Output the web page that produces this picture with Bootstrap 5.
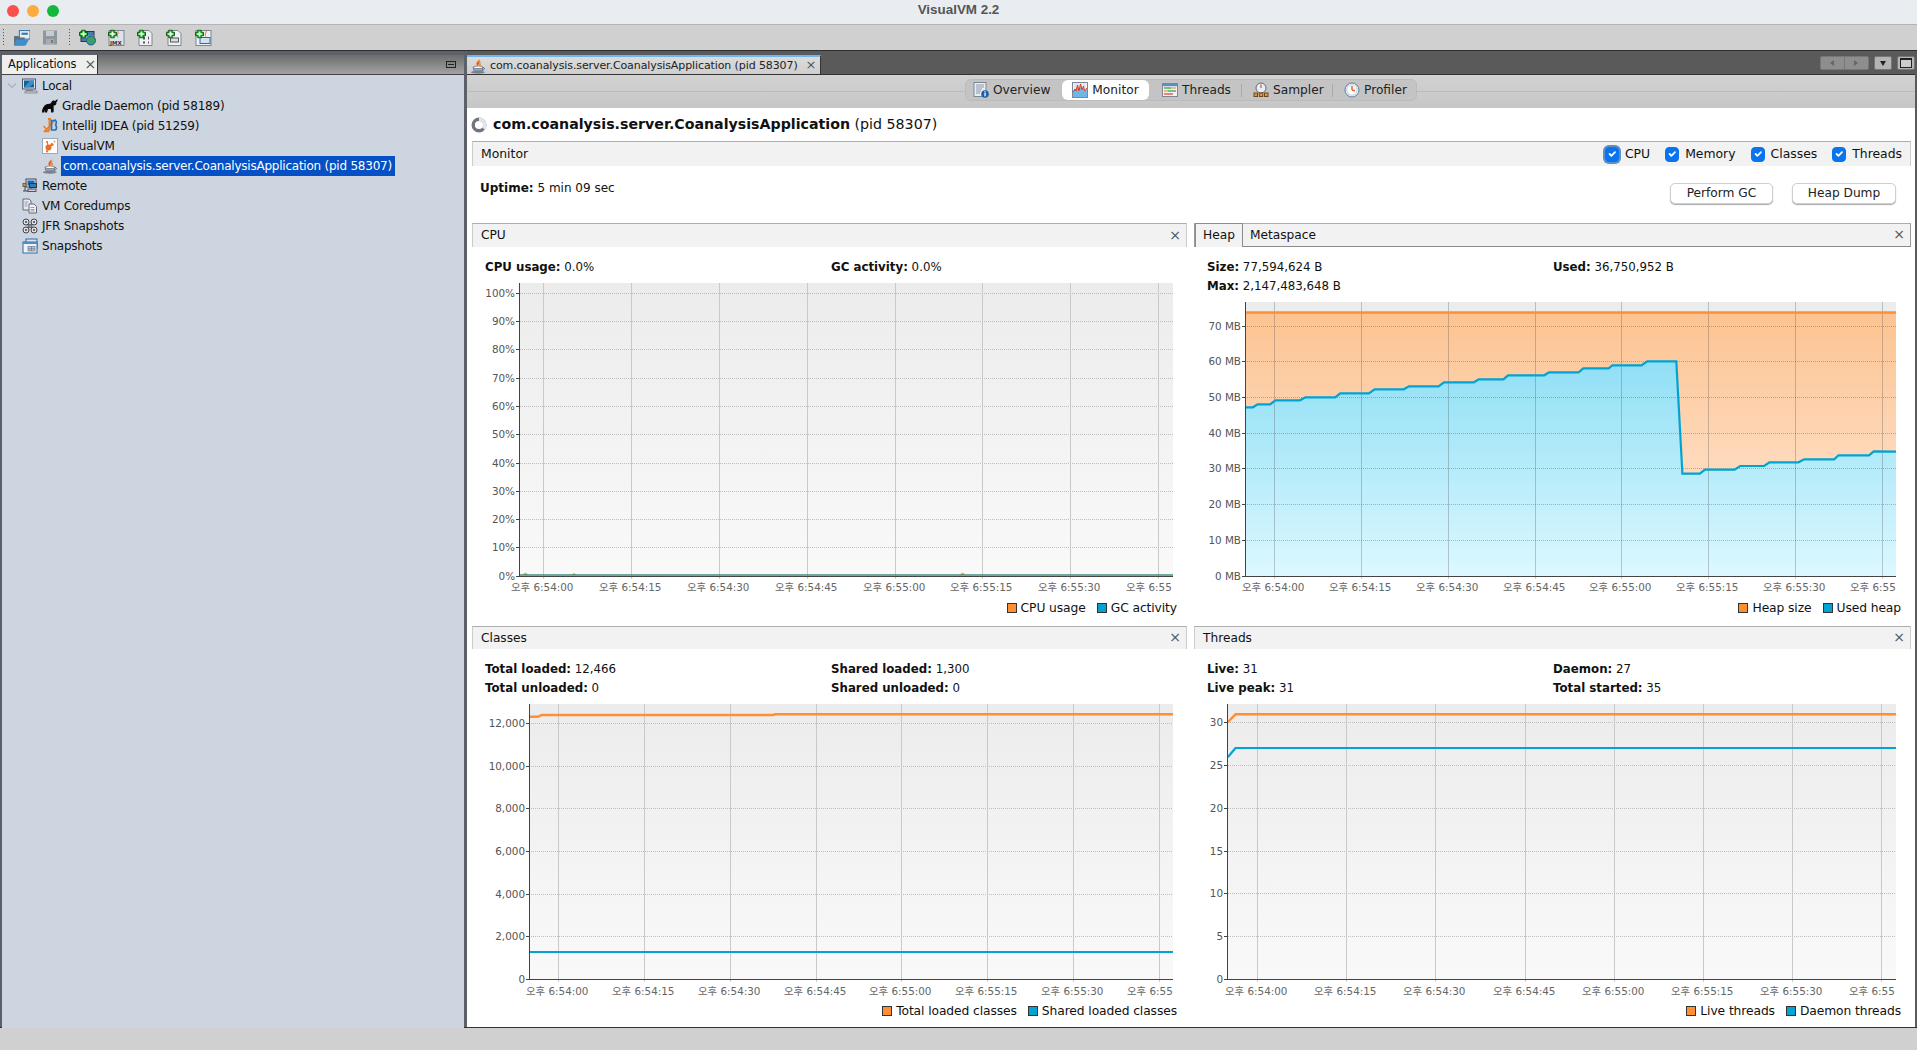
<!DOCTYPE html>
<html lang="en">
<head>
<meta charset="utf-8">
<title>VisualVM 2.2</title>
<link href="https://cdn.jsdelivr.net/npm/bootstrap@5.3.0/dist/css/bootstrap.min.css" rel="stylesheet">
<script src="https://cdn.jsdelivr.net/npm/bootstrap@5.3.0/dist/js/bootstrap.bundle.min.js"></script>
<style>
html,body{height:1050px;width:1917px;overflow:hidden}
body{background:#d0d0d0;font:12px/1.2 "DejaVu Sans","Noto Sans CJK KR",sans-serif;color:#111}
.vm-title{height:25px;background:#e9edf1;border-bottom:1px solid #b4b4b4;font:700 13.4px/1 "Liberation Sans",sans-serif;color:#555;position:relative;padding-bottom:4px}
.vm-lights{position:absolute;left:7px;top:5px;gap:8px}
.vm-light{width:12px;height:12px;border-radius:50%}
.vm-tools{height:25px;background:#d0d0d0}
.vm-main{height:977px;background:#2f2f2f;padding-top:1px}
.vm-left{width:467px;background:#5c6068;padding:4px 3px 0 2px;flex:none}
.vm-ltabs{height:20px;background:linear-gradient(#6c6c6c,#a3a3a3);border-bottom:1px solid #444}
.vm-ltab{width:96px;background:#efefef;font-size:11.4px;letter-spacing:-.1px;padding-left:6px;gap:8px;border-right:1px solid #333}
.vm-x{color:#555;font-size:14px;line-height:1;margin-top:-2px}
.vm-min{width:10px;height:7px;border:1px solid #222;margin-right:8px;position:relative}
.vm-min::after{content:"";position:absolute;left:1px;right:1px;top:2px;height:1px;background:#222}
.vm-tree{height:953px;background:#cdd5e0;padding-top:1px;font-size:12px;letter-spacing:-.23px}
.vm-row{height:20px;gap:4px;padding-left:20px}
.vm-row.vm-sub{padding-left:40px}
.vm-row svg{width:16px;height:16px;flex:none}
.vm-row svg.vm-chev{position:absolute;left:5px;top:7px;width:10px;height:6px}
.vm-sel{background:#0450c4;color:#fff;padding:0 3px 0 2px;height:20px;line-height:20px;margin-left:-1px}
.vm-right{flex:1;padding:4px 2px 0 0;background:#5a5a5a;min-width:0}
.vm-rhead{height:20px;border-bottom:1px solid #333}
.vm-rtab{width:354px;background:linear-gradient(#dcdcdc,#cfcfcf);border-top:2px solid #6db5f0;border-right:1px solid #333;font-size:11px;letter-spacing:-.1px;padding-left:3px;gap:4px;color:#222;white-space:nowrap}
.vm-rtab .vm-x{font-size:13px}
.vm-wbtns{padding-top:1px;gap:5px}
.vm-wbtn{height:14px;background:#8e8e8e;border-radius:2px;border:1px solid #777}
.vm-wbtn svg{display:block;width:100%;height:100%}
.vm-switch{height:33px;background:linear-gradient(#d2d2d2,#c6c6c6);position:relative}
.vm-switch::before{content:"";position:absolute;left:0;right:0;top:16px;height:1px;background:#bcbcbc}
.vm-pill{position:absolute;left:498px;top:4px;height:22px;width:452px;border-radius:6px;background:#c4c4c4;border:1px solid #bbb;color:#222}
.vm-pill .btn{--bs-btn-font-size:12.2px;--bs-btn-padding-x:0;--bs-btn-padding-y:0;--bs-btn-border-width:0;--bs-btn-color:#222;--bs-btn-hover-color:#222;--bs-btn-line-height:20px;height:20px;gap:4px;border-radius:6px;position:absolute;top:0;white-space:nowrap}
.vm-pill .btn svg{width:16px;height:16px;flex:none}
.vm-pill .btn.vm-on{background:#fff;width:87px;left:96px;justify-content:center}
.vm-vsep{position:absolute;top:4px;height:13px;width:1px;background:#aaa}
.vm-content{height:919px;background:#fff;padding:0 4px 0 5px}
.vm-h1{height:33px;font-size:14.2px;gap:6px;color:#111;padding-top:1px}
.vm-spin{width:16px;height:16px;flex:none;margin-left:-1px}
.vm-bar{height:25px;background:#f2f2f2;border-top:1px solid #adadad;border-left:1px solid #ccc;border-right:1px solid #ccc;padding:0 8px 0 8px;font-size:12.4px}
.vm-bar .form-check-input{width:14px;height:15px;margin:0;float:none;border-radius:4px;background-color:#0a74ef;border-color:#0a74ef;flex:none}
.vm-bar .form-check-input.vm-focus{box-shadow:0 0 0 2px #5d8fc0}
.vm-chk{gap:6px;margin:0;padding:0;min-height:0}
.vm-chk .form-check-label{line-height:1}
.vm-uptime{height:57px;position:relative;padding:15px 0 0 8px;font-size:12px}
.vm-uptime .btn{--bs-btn-font-size:12.2px;--bs-btn-padding-y:0;--bs-btn-padding-x:0;--bs-btn-color:#222;--bs-btn-bg:#fff;--bs-btn-border-color:#cfcfcf;--bs-btn-hover-color:#222;--bs-btn-hover-bg:#fff;--bs-btn-border-radius:5px;height:21px;line-height:19px;box-shadow:0 1px 1px #aaa}
.vm-btns{position:absolute;top:17px;right:15px;gap:19px}
.vm-grid{display:grid;grid-template-columns:715px 717px;column-gap:7px}
.vm-phead{height:24px;background:#f2f2f2;border-top:1px solid #adadad;border-left:1px solid #ccc;border-right:1px solid #ccc;padding:0 5px 0 8px;font-size:12.2px}
.vm-ptab{height:24px;margin:-1px 0 0 -8px;padding:0 7px 0 7px;border:1px solid #8c8c8c;border-bottom:0;background:#f2f2f2}
.vm-phead.vm-tabbed{border-bottom:1px solid #8a8a8a;border-right-color:#9a9a9a;border-left-color:#9a9a9a}
.vm-phead.vm-tabbed .vm-other{margin-left:7px}
.vm-p1{height:403px}
.vm-p2{height:401px}
.vm-p2 .vm-phead{height:23px}
.vm-stats{font-size:11.8px;padding-left:13px;display:grid;grid-template-columns:346px 1fr;align-content:start;row-gap:5px}
.vm-s1{height:36px;padding-top:13px}
.vm-s2{height:55px;padding-top:13px}
.vm-stats>div{line-height:14px;white-space:nowrap}
.vm-chart{display:block}
.vm-legend{gap:11px;font-size:12.3px;padding-right:10px;letter-spacing:-.1px;height:20px}
.vm-p2 .vm-legend{height:22px}
.vm-legend span{gap:4px}
.vm-sw{width:10px;height:10px;border:1px solid #333;flex:none}
.vm-status{height:23px;background:#d0d0d0;border-top:1px solid #333}
.xl{font-size:10.4px;fill:#666}
.yl{font-size:10.4px;fill:#555;text-anchor:end}
.gv{stroke:#c9c9c9;stroke-width:1;fill:none}
.gd{stroke:rgba(70,70,70,.28);stroke-width:1;fill:none}
.gh{stroke:#bdbdbd;stroke-width:1;stroke-dasharray:1 1;fill:none}
.gk{stroke:rgba(60,60,60,.33);stroke-width:1;stroke-dasharray:1 1;fill:none}
.ax{stroke:#444;stroke-width:1;fill:none;shape-rendering:crispEdges}
.lo{stroke:#ff8f33;stroke-width:2.4;fill:none}
.lb{stroke:#01a3d3;stroke-width:2.2;fill:none}
</style>
</head>
<body>
<svg width="0" height="0" class="position-absolute">
<defs>
<symbol id="i-java" viewBox="0 0 16 16"><path d="M9 0c1.500 2.500-3.500 3.500-2.500 6.500.3 1 1 1.600 1.400 2.400C7.500 7 11 5.500 9 0z" fill="#e8641b"/><path d="M11.500 3c-2.500 1-3 2.200-2.200 3.800.3.700.2 1.300-.2 2 2.200-.9 2.200-2.500 1.400-3.500-.4-.7 0-1.500 1-2.300z" fill="#f08a2f"/><path d="M3 9h10l-.8 3.500c-.5 1-7.900 1-8.400 0z" fill="#9aa6b3" stroke="#5a6470" stroke-width=".7"/><ellipse cx="8" cy="9.300" rx="4.500" ry="1.300" fill="#fff" stroke="#667" stroke-width=".7"/><path d="M13 9.500c2 0 2 2.500-.8 2.800" stroke="#5a6470" fill="none" stroke-width=".9"/><ellipse cx="7.800" cy="14.200" rx="7" ry="1.500" fill="#76828f"/></symbol>
<symbol id="i-local" viewBox="0 0 16 16"><rect x=".5" y="1" width="13" height="10" fill="#dfe4ea" stroke="#556"/><rect x="2" y="2.500" width="10" height="7" fill="#0f5f9c"/><path d="M2 9.500l6-7h4v3l-5 4z" fill="#3d8ec9"/><rect x="4" y="11.500" width="7" height="1.500" fill="#889"/><rect x="3" y="13" width="12" height="2" fill="#c5ccd4" stroke="#667" stroke-width=".6"/></symbol>
<symbol id="i-gradle" viewBox="0 0 16 16"><path d="M0 14.500c0-2.500.5-4 1.500-5.500C3 6.500 5.500 5.500 8 5.800c1.200-.3 1.300-2.300 2.800-3 1-.5 2 0 2.300.3.700-.8 1.500-2 2.700-1.600-.2 1.100-.7 2-1.400 2.700.3 2.200-1 3.300-2.800 3.400l.1 5c0 1.200-.3 1.900-.8 1.900H9.200l-.4-3.600H6L5 14.500H2.800l-.2-2.600-.6 2.600z" fill="#0a0a0a"/></symbol>
<symbol id="i-idea" viewBox="0 0 16 16"><path d="M6 1h3M7.500 1v9c0 3-3.500 4.500-5.500 2.500" stroke="#f07b1d" stroke-width="1.800" fill="none"/><path d="M1.500 8L7 14M14 1L3 13" stroke="#f07b1d" stroke-width="1.300" fill="none"/><path d="M9.500 2.500H13c1.800 0 1.800 4 0 4.500 2 .3 2 5-.3 5H9.500z" stroke="#2e6fb8" stroke-width="1.700" fill="none"/></symbol>
<symbol id="i-vvm" viewBox="0 0 16 16"><rect x=".5" y=".5" width="15" height="15" fill="#fff" stroke="#9aa9ba"/><circle cx="6.500" cy="9.500" r="3" fill="#f26a1f"/><circle cx="10" cy="6.500" r="1.600" fill="#f26a1f"/><circle cx="5" cy="4" r="1" fill="#f26a1f"/><circle cx="12.500" cy="3.500" r="1" fill="#f59a5f"/><circle cx="5" cy="13.500" r="1" fill="#f26a1f"/><path d="M6 9l4-2.500M5 4l1.500 5M6 10L5 13" stroke="#f26a1f"/></symbol>
<symbol id="i-remote" viewBox="0 0 16 16"><rect x="4" y="1" width="10" height="8" fill="#dfe4ea" stroke="#445"/><rect x="5.500" y="2.500" width="7" height="5" fill="#1a69a8"/><rect x="1" y="5.500" width="3" height="3" fill="#e88a35" stroke="#664"/><rect x="6" y="11" width="8" height="2.500" fill="#ccd" stroke="#556"/><path d="M9 9v2M3 8.500V13h3M1 13h2" stroke="#445" fill="none"/><rect x="7.500" y="5.500" width="7" height="4" fill="#2a7cba" stroke="#334"/></symbol>
<symbol id="i-core" viewBox="0 0 16 16"><path d="M1 1h6l2 2v9H1z" fill="#e9edf2" stroke="#667"/><path d="M7 6h5l2.500 2.500V15H7z" fill="#f2f4f7" stroke="#667"/><path d="M2.500 4h4M2.500 6h3M2.500 8h3M8.500 9.500h4M8.500 11.500h4M8.500 13h4" stroke="#7b8794" stroke-width=".8"/></symbol>
<symbol id="i-jfr" viewBox="0 0 16 16"><circle cx="4" cy="4" r="3" fill="#dce1e7" stroke="#444"/><circle cx="12" cy="4" r="3" fill="#dce1e7" stroke="#444"/><circle cx="4" cy="12" r="3" fill="#dce1e7" stroke="#444"/><circle cx="12" cy="12" r="3" fill="#dce1e7" stroke="#444"/><rect x="6" y="6.500" width="4" height="3" fill="#889" stroke="#444" stroke-width=".6"/><circle cx="4" cy="4" r="1" fill="#444"/><circle cx="12" cy="4" r="1" fill="#444"/><circle cx="4" cy="12" r="1" fill="#444"/><circle cx="12" cy="12" r="1" fill="#444"/></symbol>
<symbol id="i-snap" viewBox="0 0 16 16"><rect x="4" y="1" width="11" height="9" fill="#dbe5ef" stroke="#2d6da3"/><rect x="1" y="4" width="14" height="11" fill="#eef3f8" stroke="#2d6da3"/><rect x="1" y="4" width="14" height="2" fill="#4d8fc4"/><rect x="6" y="8.500" width="7" height="4.500" fill="#b8c6d4" stroke="#667" stroke-width=".6"/><path d="M6 10.800h7M9.500 8.500v4.500" stroke="#667" stroke-width=".6"/></symbol>
<symbol id="i-overview" viewBox="0 0 16 16"><rect x="1" y=".5" width="12" height="14" fill="#e9eef3" stroke="#7b8794"/><path d="M3 3h8M3 5h8M3 7h6M3 9h5M3 11h4" stroke="#8a98a8"/><circle cx="12" cy="12" r="3.800" fill="#1f5fb0"/><rect x="11.400" y="11" width="1.300" height="3.300" fill="#fff"/><rect x="11.400" y="9.300" width="1.300" height="1.200" fill="#fff"/></symbol>
<symbol id="i-monitor" viewBox="0 0 16 16"><rect x=".5" y=".5" width="15" height="15" fill="#eef1f5" stroke="#7b8794"/><path d="M3 1v14M6 1v14M9 1v14M12 1v14" stroke="#c7ced6" stroke-width=".6"/><path d="M1 10l2-3 1 2 1.500-5L7 10l1.500-6L10 9l1.500-3 1 3L15 7v8H1z" fill="#6fb5e6"/><path d="M1 10l2-3 1 2 1.500-6L7 9l1.500-7L10 8l1.500-4 1 5L15 6" stroke="#d8352a" fill="none"/></symbol>
<symbol id="i-threads" viewBox="0 0 16 16"><rect x=".5" y="1.500" width="15" height="13" fill="#eef1f5" stroke="#7b8794"/><rect x="1" y="2" width="14" height="2.200" fill="#5d8fbd"/><path d="M2 6h7" stroke="#3fa24a" stroke-width="1.300"/><path d="M9 6h5" stroke="#e9a33a" stroke-width="1.300"/><path d="M2 9h4" stroke="#e9a33a" stroke-width="1.300"/><path d="M6 9h8" stroke="#3fa24a" stroke-width="1.300"/><path d="M2 12h9" stroke="#d9502e" stroke-width="1.300"/></symbol>
<symbol id="i-sampler" viewBox="0 0 16 16"><circle cx="8" cy="6" r="5" fill="#e9eef3" stroke="#667"/><path d="M8 6V2.500" stroke="#d9502e" stroke-width="1.200"/><rect x="1" y="11" width="3.500" height="3.500" fill="#e8912e" stroke="#6b4a1f"/><rect x="6.300" y="11" width="3.500" height="3.500" fill="#e8912e" stroke="#6b4a1f"/><rect x="11.500" y="11" width="3.500" height="3.500" fill="#e8912e" stroke="#6b4a1f"/></symbol>
<symbol id="i-profiler" viewBox="0 0 16 16"><circle cx="8" cy="8" r="7" fill="#dcecf8" stroke="#6a7f94"/><circle cx="8" cy="8" r="5" fill="#fff" stroke="#a9c4da" stroke-width=".6"/><path d="M8 8V4M8 8l3 1" stroke="#e8641b" stroke-width="1.500"/></symbol>
<symbol id="t-open" viewBox="0 0 16 16"><rect x="6" y="1" width="10" height="8" fill="#e6eef6" stroke="#3c77a8"/><rect x="8" y="3" width="6" height="2" fill="#3c77a8"/><path d="M1 6h4l1 1.500h5V15H1z" fill="#5b6f82"/><path d="M1 15l2-5.500h12L12 15z" fill="#3e8ec7"/></symbol>
<symbol id="t-save" viewBox="0 0 16 16"><path d="M1 1h14v14H1z" fill="#8f979e"/><rect x="4" y="1.500" width="8" height="5" fill="#c8ccd0"/><rect x="4" y="9.500" width="8" height="5" fill="#a7adb3"/><rect x="9" y="10.500" width="2" height="3" fill="#777"/></symbol>
<symbol id="t-plus" viewBox="0 0 9 9"><path d="M2.800.5h3.400v2.300h2.300v3.400H6.200v2.300H2.800V6.200H.5V2.800h2.300z" fill="#3ccb40" stroke="#0d4a10" stroke-width=".9"/><path d="M3.800 2.200h1.400v1.600h1.600v1.400H5.200v1.600H3.800V5.200H2.200V3.800h1.600z" fill="#e8ffe8"/></symbol>
</defs>
</svg>

<header class="vm-title d-flex align-items-center justify-content-center">
  <div class="vm-lights d-flex"><span class="vm-light" style="background:#fa4f4b"></span><span class="vm-light" style="background:#fdab3c"></span><span class="vm-light" style="background:#14b83c"></span></div>
  <span>VisualVM 2.2</span>
</header>

<nav class="vm-tools position-relative" aria-label="Toolbar">
  <svg class="position-absolute" style="left:0;top:0" width="230" height="25">
    <path d="M3.500 4v16M69.500 4v16" stroke="#555" stroke-dasharray="1 2"/>
    <g transform="translate(0 1.500)">
    <use href="#t-open" x="13" y="3" width="17" height="17"/>
    <use href="#t-save" x="42" y="3" width="16" height="16"/>
    <rect x="81" y="5" width="13" height="10" fill="#4a7ea8" stroke="#334"/><rect x="86" y="9" width="8" height="5" fill="#7db0d4"/><circle cx="91" cy="14" r="4.500" fill="#3ca062" stroke="#1d5a9a"/>
    <use href="#t-plus" x="79" y="3" width="9" height="9"/>
    <rect x="109" y="4" width="15" height="15" fill="#dde3ea" stroke="#7b8794"/><text x="110" y="18" font-size="5.500" font-weight="700" fill="#333">JMX</text><path d="M118 5c1 2-2 3 0 6" stroke="#e8641b" fill="none"/>
    <use href="#t-plus" x="108" y="3" width="9" height="9"/>
    <path d="M139 4h10l3 3v12h-13z" fill="#eef1f5" stroke="#7b8794"/><path d="M143 10h2v3h-2zM148 10h1v3h-1zM143 15h2v2h-2zM148 15h1v2h-1z" fill="#555"/>
    <use href="#t-plus" x="137" y="3" width="9" height="9"/>
    <path d="M168 4h10l3 3v12h-13z" fill="#eef1f5" stroke="#7b8794"/><rect x="170" y="11" width="9" height="5" fill="#555"/><rect x="171" y="12" width="7" height="3" fill="#ddd"/>
    <use href="#t-plus" x="166" y="3" width="9" height="9"/>
    <rect x="196" y="4" width="15" height="15" fill="#eef1f5" stroke="#7b8794"/><rect x="200" y="11" width="10" height="6" fill="#cfe2f1" stroke="#2d6da3"/><path d="M206 4c1 2-2 3 0 6" stroke="#e8641b" fill="none"/>
    <use href="#t-plus" x="195" y="3" width="9" height="9"/>
    </g>
  </svg>
</nav>

<main class="vm-main d-flex">
  <aside class="vm-left">
    <div class="vm-ltabs d-flex justify-content-between align-items-center">
      <div class="vm-ltab h-100 d-flex align-items-center"><span>Applications</span><span class="vm-x">×</span></div>
      <span class="vm-min"></span>
    </div>
    <ul class="vm-tree list-unstyled m-0">
      <li class="vm-row d-flex align-items-center position-relative"><svg class="vm-chev" viewBox="0 0 10 6"><path d="M1 .5l4 4 4-4" stroke="#a9b1bb" fill="none" stroke-width="1.200"/></svg><svg><use href="#i-local"/></svg><span>Local</span></li>
      <li class="vm-row vm-sub d-flex align-items-center"><svg><use href="#i-gradle"/></svg><span>Gradle Daemon (pid 58189)</span></li>
      <li class="vm-row vm-sub d-flex align-items-center"><svg><use href="#i-idea"/></svg><span>IntelliJ IDEA (pid 51259)</span></li>
      <li class="vm-row vm-sub d-flex align-items-center"><svg><use href="#i-vvm"/></svg><span>VisualVM</span></li>
      <li class="vm-row vm-sub d-flex align-items-center"><svg><use href="#i-java"/></svg><span class="vm-sel">com.coanalysis.server.CoanalysisApplication (pid 58307)</span></li>
      <li class="vm-row d-flex align-items-center"><svg><use href="#i-remote"/></svg><span>Remote</span></li>
      <li class="vm-row d-flex align-items-center"><svg><use href="#i-core"/></svg><span>VM Coredumps</span></li>
      <li class="vm-row d-flex align-items-center"><svg><use href="#i-jfr"/></svg><span>JFR Snapshots</span></li>
      <li class="vm-row d-flex align-items-center"><svg><use href="#i-snap"/></svg><span>Snapshots</span></li>
    </ul>
  </aside>

  <section class="vm-right">
    <div class="vm-rhead d-flex justify-content-between">
      <div class="vm-rtab d-flex align-items-center"><svg width="16" height="16"><use href="#i-java"/></svg><span>com.coanalysis.server.CoanalysisApplication (pid 58307)</span><span class="vm-x ms-1">×</span></div>
      <div class="vm-wbtns d-flex align-items-start">
        <div class="vm-wbtn" style="width:49px"><svg viewBox="0 0 47 12"><path d="M9 6l4-3v6zM37 6l-4-3v6z" fill="#666"/><path d="M23.500 0v12" stroke="#777"/></svg></div>
        <div class="vm-wbtn" style="width:18px;background:#b4b4b4"><svg viewBox="0 0 16 12"><path d="M5 4h6l-3 5z" fill="#222"/></svg></div>
        <div class="vm-wbtn" style="width:18px;background:#b4b4b4"><svg viewBox="0 0 16 12"><rect x="2.500" y="1.500" width="11" height="9" fill="#ccc" stroke="#222"/><path d="M2.500 2.500h11" stroke="#222"/></svg></div>
      </div>
    </div>
    <div class="vm-switch">
      <div class="vm-pill" role="group">
        <span class="btn d-flex align-items-center" style="left:7px"><svg><use href="#i-overview"/></svg>Overview</span>
        <span class="btn vm-on d-flex align-items-center"><svg><use href="#i-monitor"/></svg>Monitor</span>
        <span class="btn d-flex align-items-center" style="left:196px"><svg><use href="#i-threads"/></svg>Threads</span>
        <i class="vm-vsep" style="left:275px"></i>
        <span class="btn d-flex align-items-center" style="left:287px"><svg><use href="#i-sampler"/></svg>Sampler</span>
        <i class="vm-vsep" style="left:366px"></i>
        <span class="btn d-flex align-items-center" style="left:378px"><svg><use href="#i-profiler"/></svg>Profiler</span>
      </div>
    </div>
    <div class="vm-content">
      <h1 class="vm-h1 d-flex align-items-center m-0 fw-normal">
        <svg class="vm-spin" viewBox="0 0 16 16"><circle cx="8" cy="8" r="5.800" fill="none" stroke="#6f7680" stroke-width="3.400"/><path d="M8 2.200a5.800 5.800 0 0 1 4.500 9.400" fill="none" stroke="#e2e5e9" stroke-width="3.400"/></svg>
        <span><b>com.coanalysis.server.CoanalysisApplication</b> (pid 58307)</span>
      </h1>
      <div class="vm-bar d-flex justify-content-between align-items-center">
        <span>Monitor</span>
        <div class="d-flex" style="gap:15px">
          <div class="form-check vm-chk d-flex align-items-center"><input class="form-check-input vm-focus" type="checkbox" checked id="c1"><label class="form-check-label" for="c1">CPU</label></div>
          <div class="form-check vm-chk d-flex align-items-center"><input class="form-check-input" type="checkbox" checked id="c2"><label class="form-check-label" for="c2">Memory</label></div>
          <div class="form-check vm-chk d-flex align-items-center"><input class="form-check-input" type="checkbox" checked id="c3"><label class="form-check-label" for="c3">Classes</label></div>
          <div class="form-check vm-chk d-flex align-items-center"><input class="form-check-input" type="checkbox" checked id="c4"><label class="form-check-label" for="c4">Threads</label></div>
        </div>
      </div>
      <div class="vm-uptime">
        <div><b>Uptime:</b> 5 min 09 sec</div>
        <div class="vm-btns d-flex">
          <button type="button" class="btn" style="width:103px">Perform GC</button>
          <button type="button" class="btn" style="width:104px">Heap Dump</button>
        </div>
      </div>

      <div class="vm-grid">
        <article class="vm-p1">
          <div class="vm-phead d-flex justify-content-between align-items-center"><span>CPU</span><span class="vm-x">×</span></div>
          <div class="vm-stats vm-s1"><div><b>CPU usage:</b> 0.0%</div><div><b>GC activity:</b> 0.0%</div></div>
          <svg class="vm-chart" width="715" height="315" viewBox="472 283 715 315">
            <defs><linearGradient id="bg1" x1="0" y1="0" x2="0" y2="1"><stop offset="0" stop-color="#ececec"/><stop offset="1" stop-color="#f9f9f9"/></linearGradient></defs>
            <rect x="520" y="283" width="653" height="293" fill="url(#bg1)"/>
            <path class="gh" d="M520 293.500H1173M520 321.500H1173M520 349.500H1173M520 378.500H1173M520 406.500H1173M520 434.500H1173M520 463.500H1173M520 491.500H1173M520 519.500H1173M520 547.500H1173"/>
            <path class="gv" d="M543.500 283V579M631.500 283V579M719.500 283V579M807.500 283V579M895.500 283V579M982.500 283V579M1070.500 283V579M1158.500 283V579"/>
            <path d="M522 575l3.500-2.500 3.500 2.500zM571 575l3-2 3 2zM959 575l3.500-2.500 3.500 2.500z" fill="#ff9a45"/>
            <path d="M520 575H1173" stroke="#3f8f7f" stroke-width="1.500"/>
            <path class="ax" d="M519.500 283V576.500H1173M516 293.500h3M516 321.500h3M516 349.500h3M516 378.500h3M516 406.500h3M516 434.500h3M516 463.500h3M516 491.500h3M516 519.500h3M516 547.500h3M516 576.500h3"/>
            <text class="yl" x="515" y="297">100%</text><text class="yl" x="515" y="325">90%</text><text class="yl" x="515" y="353">80%</text><text class="yl" x="515" y="382">70%</text><text class="yl" x="515" y="410">60%</text><text class="yl" x="515" y="438">50%</text><text class="yl" x="515" y="467">40%</text><text class="yl" x="515" y="495">30%</text><text class="yl" x="515" y="523">20%</text><text class="yl" x="515" y="551">10%</text><text class="yl" x="515" y="580">0%</text>
            <text class="xl" x="511" y="591">오후 6:54:00</text><text class="xl" x="599" y="591">오후 6:54:15</text><text class="xl" x="687" y="591">오후 6:54:30</text><text class="xl" x="775" y="591">오후 6:54:45</text><text class="xl" x="863" y="591">오후 6:55:00</text><text class="xl" x="950" y="591">오후 6:55:15</text><text class="xl" x="1038" y="591">오후 6:55:30</text><text class="xl" x="1126" y="591">오후 6:55</text>
          </svg>
          <div class="vm-legend d-flex justify-content-end align-items-center"><span class="d-flex align-items-center"><i class="vm-sw" style="background:#ff8f33"></i>CPU usage</span><span class="d-flex align-items-center"><i class="vm-sw" style="background:#01a3d3"></i>GC activity</span></div>
        </article>

        <article class="vm-p1">
          <div class="vm-phead vm-tabbed d-flex align-items-center"><span class="vm-ptab d-flex align-items-center">Heap</span><span class="vm-other flex-grow-1">Metaspace</span><span class="vm-x">×</span></div>
          <div class="vm-stats vm-s2"><div><b>Size:</b> 77,594,624 B</div><div><b>Used:</b> 36,750,952 B</div><div><b>Max:</b> 2,147,483,648 B</div></div>
          <svg class="vm-chart" width="717" height="296" viewBox="1194 302 717 296">
            <defs>
              <linearGradient id="go" gradientUnits="userSpaceOnUse" x1="0" y1="312" x2="0" y2="576"><stop offset="0" stop-color="#fcc391"/><stop offset="1" stop-color="#ffeadb"/></linearGradient>
              <linearGradient id="gb" gradientUnits="userSpaceOnUse" x1="0" y1="361" x2="0" y2="576"><stop offset="0" stop-color="#90dff5"/><stop offset="1" stop-color="#dcf8ff"/></linearGradient>
            </defs>
            <rect x="1245" y="302" width="651" height="274" fill="url(#bg1)"/>
            <rect x="1245" y="312" width="651" height="264" fill="url(#go)"/>
            <path fill="url(#gb)" d="M1245.300 576V407.300H1252.900L1257.600 404.300H1270.200L1275.400 400.300H1299.900L1305.500 397.300H1335.100L1340.300 393.300H1368.900L1374.600 389.300H1403.700L1408.900 386.300H1438.500L1444.100 382.300H1473.800L1478.900 379.300H1503.400L1508.100 375.300H1544.300L1549 372.300H1578.600L1583.300 368.300H1608.600L1612.400 365.300H1641.500L1647.200 361.300H1676.300L1682.400 473.700H1699.800L1705 469.700H1734.600L1740.200 466H1764.200L1769.400 462.300H1798.500L1804.200 459.300H1834.200L1838.500 455.300H1869L1873.700 451.300L1896 451.700V576z"/>
            <path class="gk" d="M1245 326.500H1896M1245 361.500H1896M1245 397.500H1896M1245 433.500H1896M1245 468.500H1896M1245 504.500H1896M1245 540.500H1896"/>
            <path class="gd" d="M1274.500 302V579M1361.500 302V579M1448.500 302V579M1535.500 302V579M1621.500 302V579M1708.500 302V579M1795.500 302V579M1882.500 302V579"/>
            <path class="lo" d="M1245 312.500H1896"/>
            <path class="lb" d="M1245.300 407.300H1252.900L1257.600 404.300H1270.200L1275.400 400.300H1299.900L1305.500 397.300H1335.100L1340.300 393.300H1368.900L1374.600 389.300H1403.700L1408.900 386.300H1438.500L1444.100 382.300H1473.800L1478.900 379.300H1503.400L1508.100 375.300H1544.300L1549 372.300H1578.600L1583.300 368.300H1608.600L1612.400 365.300H1641.500L1647.200 361.300H1676.300L1682.400 473.700H1699.800L1705 469.700H1734.600L1740.200 466H1764.200L1769.400 462.300H1798.500L1804.200 459.300H1834.200L1838.500 455.300H1869L1873.700 451.300L1896 451.700"/>
            <path class="ax" d="M1245.500 302V576.500H1896M1242 326.500h3M1242 361.500h3M1242 397.500h3M1242 433.500h3M1242 468.500h3M1242 504.500h3M1242 540.500h3M1242 576.500h3"/>
            <text class="yl" x="1241" y="330">70 MB</text><text class="yl" x="1241" y="365">60 MB</text><text class="yl" x="1241" y="401">50 MB</text><text class="yl" x="1241" y="437">40 MB</text><text class="yl" x="1241" y="472">30 MB</text><text class="yl" x="1241" y="508">20 MB</text><text class="yl" x="1241" y="544">10 MB</text><text class="yl" x="1241" y="580">0 MB</text>
            <text class="xl" x="1242" y="591">오후 6:54:00</text><text class="xl" x="1329" y="591">오후 6:54:15</text><text class="xl" x="1416" y="591">오후 6:54:30</text><text class="xl" x="1503" y="591">오후 6:54:45</text><text class="xl" x="1589" y="591">오후 6:55:00</text><text class="xl" x="1676" y="591">오후 6:55:15</text><text class="xl" x="1763" y="591">오후 6:55:30</text><text class="xl" x="1850" y="591">오후 6:55</text>
          </svg>
          <div class="vm-legend d-flex justify-content-end align-items-center"><span class="d-flex align-items-center"><i class="vm-sw" style="background:#ff8f33"></i>Heap size</span><span class="d-flex align-items-center"><i class="vm-sw" style="background:#01a3d3"></i>Used heap</span></div>
        </article>

        <article class="vm-p2">
          <div class="vm-phead d-flex justify-content-between align-items-center"><span>Classes</span><span class="vm-x">×</span></div>
          <div class="vm-stats vm-s2"><div><b>Total loaded:</b> 12,466</div><div><b>Shared loaded:</b> 1,300</div><div><b>Total unloaded:</b> 0</div><div><b>Shared unloaded:</b> 0</div></div>
          <svg class="vm-chart" width="715" height="296" viewBox="472 704 715 296">
            <rect x="529" y="704" width="644" height="275" fill="url(#bg1)"/>
            <path class="gh" d="M529 723.500H1173M529 766.500H1173M529 808.500H1173M529 851.500H1173M529 894.500H1173M529 936.500H1173"/>
            <path class="gv" d="M558.500 704V982M644.500 704V982M730.500 704V982M816.500 704V982M901.500 704V982M987.500 704V982M1073.500 704V982M1159.500 704V982"/>
            <path class="lo" d="M529 716.700H538L542 715H773L775.500 714.300H1173"/>
            <path class="lb" d="M529 952H1173"/>
            <path class="ax" d="M529.500 704V979.500H1173M526 723.500h3M526 766.500h3M526 808.500h3M526 851.500h3M526 894.500h3M526 936.500h3M526 979.500h3"/>
            <text class="yl" x="525" y="727">12,000</text><text class="yl" x="525" y="770">10,000</text><text class="yl" x="525" y="812">8,000</text><text class="yl" x="525" y="855">6,000</text><text class="yl" x="525" y="898">4,000</text><text class="yl" x="525" y="940">2,000</text><text class="yl" x="525" y="983">0</text>
            <text class="xl" x="526" y="995">오후 6:54:00</text><text class="xl" x="612" y="995">오후 6:54:15</text><text class="xl" x="698" y="995">오후 6:54:30</text><text class="xl" x="784" y="995">오후 6:54:45</text><text class="xl" x="869" y="995">오후 6:55:00</text><text class="xl" x="955" y="995">오후 6:55:15</text><text class="xl" x="1041" y="995">오후 6:55:30</text><text class="xl" x="1127" y="995">오후 6:55</text>
          </svg>
          <div class="vm-legend d-flex justify-content-end align-items-center"><span class="d-flex align-items-center"><i class="vm-sw" style="background:#ff8f33"></i>Total loaded classes</span><span class="d-flex align-items-center"><i class="vm-sw" style="background:#01a3d3"></i>Shared loaded classes</span></div>
        </article>

        <article class="vm-p2">
          <div class="vm-phead d-flex justify-content-between align-items-center"><span>Threads</span><span class="vm-x">×</span></div>
          <div class="vm-stats vm-s2"><div><b>Live:</b> 31</div><div><b>Daemon:</b> 27</div><div><b>Live peak:</b> 31</div><div><b>Total started:</b> 35</div></div>
          <svg class="vm-chart" width="717" height="296" viewBox="1194 704 717 296">
            <rect x="1228" y="704" width="668" height="275" fill="url(#bg1)"/>
            <path class="gh" d="M1228 722.500H1896M1228 765.500H1896M1228 808.500H1896M1228 851.500H1896M1228 893.500H1896M1228 936.500H1896"/>
            <path class="gv" d="M1257.500 704V982M1346.500 704V982M1435.500 704V982M1525.500 704V982M1614.500 704V982M1703.500 704V982M1792.500 704V982M1881.500 704V982"/>
            <path class="lo" d="M1228 722L1235.500 714.300H1896"/>
            <path class="lb" d="M1228 757L1235.500 748H1896"/>
            <path class="ax" d="M1227.500 704V979.500H1896M1224 722.500h3M1224 765.500h3M1224 808.500h3M1224 851.500h3M1224 893.500h3M1224 936.500h3M1224 979.500h3"/>
            <text class="yl" x="1223" y="726">30</text><text class="yl" x="1223" y="769">25</text><text class="yl" x="1223" y="812">20</text><text class="yl" x="1223" y="855">15</text><text class="yl" x="1223" y="897">10</text><text class="yl" x="1223" y="940">5</text><text class="yl" x="1223" y="983">0</text>
            <text class="xl" x="1225" y="995">오후 6:54:00</text><text class="xl" x="1314" y="995">오후 6:54:15</text><text class="xl" x="1403" y="995">오후 6:54:30</text><text class="xl" x="1493" y="995">오후 6:54:45</text><text class="xl" x="1582" y="995">오후 6:55:00</text><text class="xl" x="1671" y="995">오후 6:55:15</text><text class="xl" x="1760" y="995">오후 6:55:30</text><text class="xl" x="1849" y="995">오후 6:55</text>
          </svg>
          <div class="vm-legend d-flex justify-content-end align-items-center"><span class="d-flex align-items-center"><i class="vm-sw" style="background:#ff8f33"></i>Live threads</span><span class="d-flex align-items-center"><i class="vm-sw" style="background:#01a3d3"></i>Daemon threads</span></div>
        </article>
      </div>
    </div>
  </section>
</main>
<footer class="vm-status"></footer>
</body>
</html>
